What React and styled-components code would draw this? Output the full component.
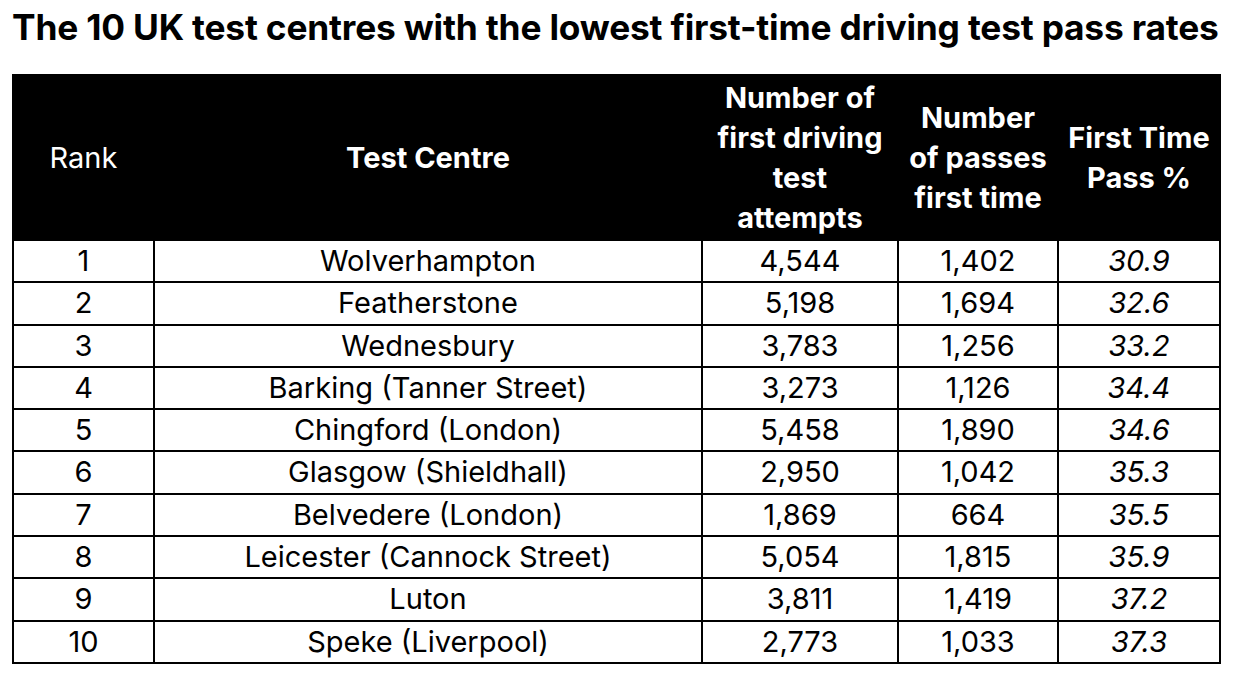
import styled, { createGlobalStyle } from 'styled-components';

const GlobalStyle = createGlobalStyle`
  body {
    margin: 0;
    background: #ffffff;
    font-family: Inter, "Liberation Sans", sans-serif;
    color: #000000;
  }
`;

const Page = styled.div`
  padding: 7px 12px 0 12px;
`;

const Title = styled.h1`
  margin: 0 0 25px;
  font-size: 35.3px;
  line-height: 42px;
  font-weight: 700;
  letter-spacing: -0.18px;
  white-space: nowrap;
`;

const Table = styled.table`
  width: 1207px;
  border-collapse: collapse;
  border: 2px solid #000;
  table-layout: fixed;
`;

const HeadCell = styled.th`
  background: #000;
  color: #fff;
  font-size: 29px;
  line-height: 40px;
  font-weight: ${(p) => (p.$light ? 400 : 700)};
  text-align: center;
  padding: 2px 4px 1px;
  border: 2px solid #000;
`;

const Cell = styled.td`
  font-size: 29px;
  line-height: 40.3px;
  text-align: center;
  padding: 0 4px;
  border: 2px solid #000;
  font-style: ${(p) => (p.$italic ? 'italic' : 'normal')};
  white-space: nowrap;
`;

const rows = [
  [1, 'Wolverhampton', '4,544', '1,402', '30.9'],
  [2, 'Featherstone', '5,198', '1,694', '32.6'],
  [3, 'Wednesbury', '3,783', '1,256', '33.2'],
  [4, 'Barking (Tanner Street)', '3,273', '1,126', '34.4'],
  [5, 'Chingford (London)', '5,458', '1,890', '34.6'],
  [6, 'Glasgow (Shieldhall)', '2,950', '1,042', '35.3'],
  [7, 'Belvedere (London)', '1,869', '664', '35.5'],
  [8, 'Leicester (Cannock Street)', '5,054', '1,815', '35.9'],
  [9, 'Luton', '3,811', '1,419', '37.2'],
  [10, 'Speke (Liverpool)', '2,773', '1,033', '37.3'],
];

export default function App() {
  return (
    <Page>
      <GlobalStyle />
      <Title>The 10 UK test centres with the lowest first-time driving test pass rates</Title>
      <Table>
        <colgroup>
          <col style={{ width: 141 }} />
          <col style={{ width: 548 }} />
          <col style={{ width: 196 }} />
          <col style={{ width: 160 }} />
          <col style={{ width: 162 }} />
        </colgroup>
        <thead>
          <tr>
            <HeadCell $light>Rank</HeadCell>
            <HeadCell>Test Centre</HeadCell>
            <HeadCell>Number of first driving test attempts</HeadCell>
            <HeadCell>Number of passes first time</HeadCell>
            <HeadCell>First Time Pass %</HeadCell>
          </tr>
        </thead>
        <tbody>
          {rows.map(([rank, centre, attempts, passes, pct]) => (
            <tr key={rank}>
              <Cell>{rank}</Cell>
              <Cell>{centre}</Cell>
              <Cell>{attempts}</Cell>
              <Cell>{passes}</Cell>
              <Cell $italic>{pct}</Cell>
            </tr>
          ))}
        </tbody>
      </Table>
    </Page>
  );
}
